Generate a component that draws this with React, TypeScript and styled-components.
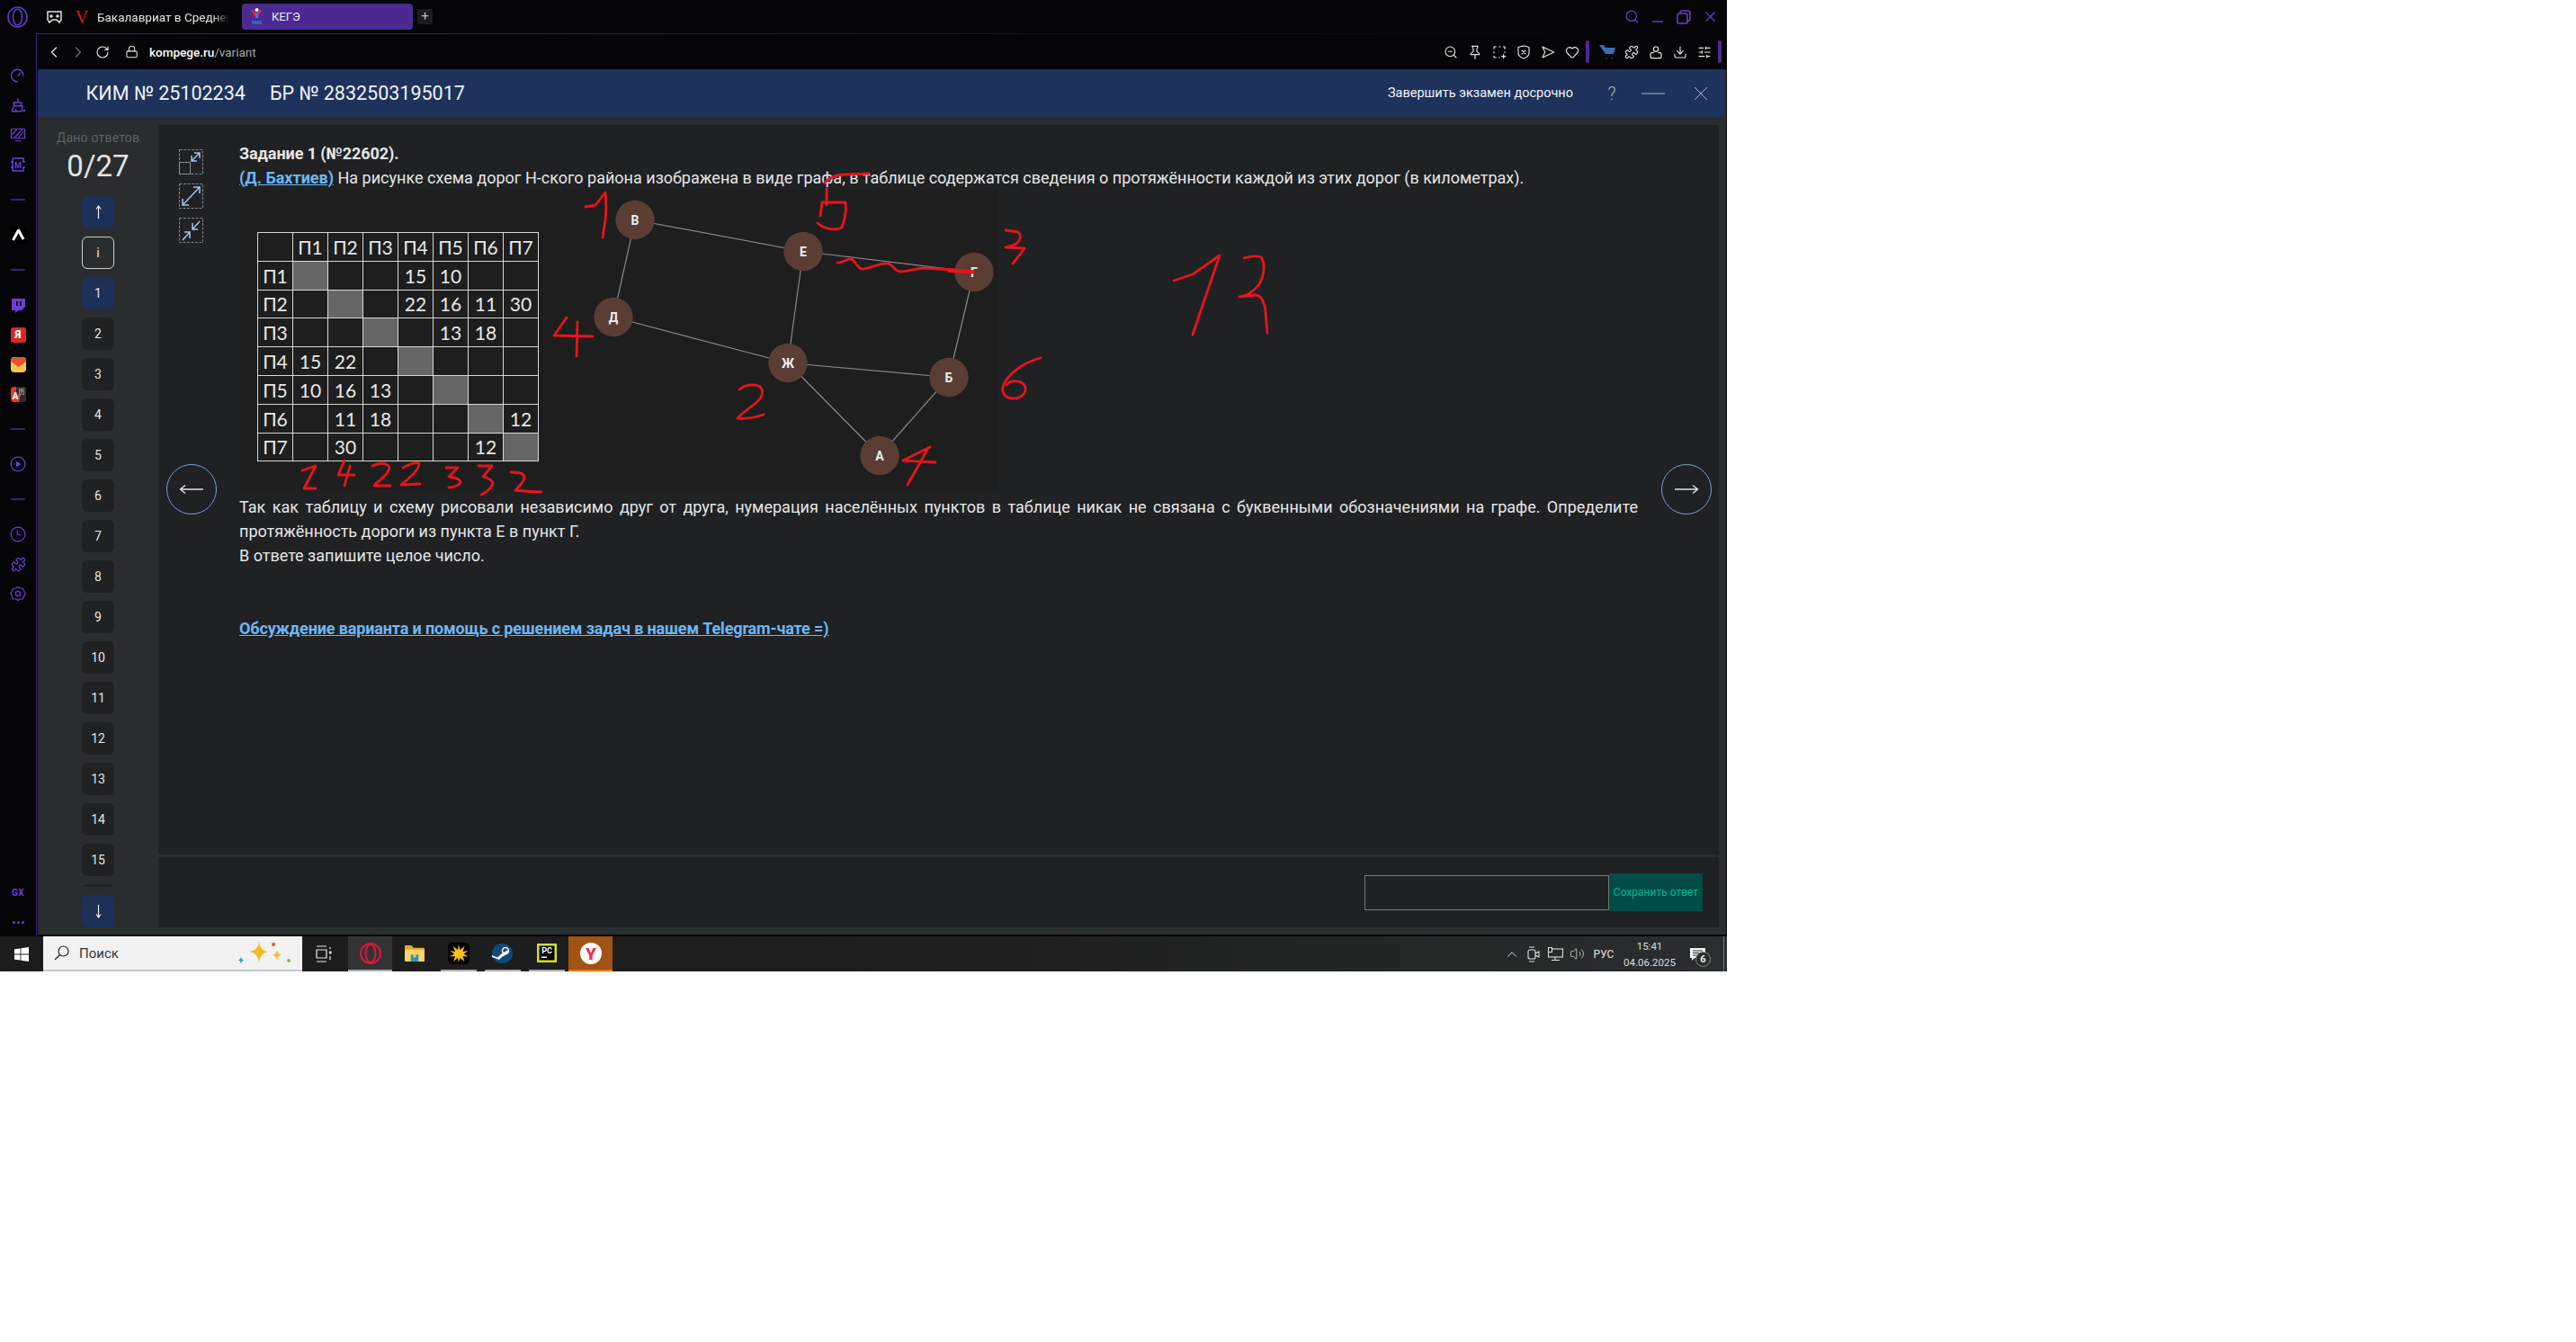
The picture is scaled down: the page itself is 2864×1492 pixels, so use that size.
import React from "react";
import styled, { createGlobalStyle } from "styled-components";
import {
  ChevronLeft, ChevronRight, RotateCw, Lock, ZoomOut, Heart, Puzzle, Download,
  SlidersHorizontal, Search, X, ChevronUp, Volume2,
} from "lucide-react";

const Global = createGlobalStyle`
  html, body { margin: 0; padding: 0; background: #fff; }
  body { width: 2864px; height: 1492px; overflow: hidden; font-family: Roboto, "Liberation Sans", sans-serif; }
  * { box-sizing: border-box; }
`;

const Stage = styled.div`
  position: relative; width: 1920px; height: 1080px;
  display: flex; flex-direction: column; background: #050507; overflow: hidden;
`;

/* ---------- tab strip ---------- */
const TabStrip = styled.div`
  height: 37px; flex: none; display: flex; align-items: center; padding: 0 4.5px 0 8px; color: #e8e8e8;
`;
const StripIcon = styled.span<{ $ml: number; $w: number }>`
  display: flex; align-items: center; justify-content: center; flex: none;
  width: ${p => p.$w}px; margin-left: ${p => p.$ml}px;
`;
const InactiveTitle = styled.span`
  width: 147px; margin-left: 9px; font-size: 13.5px; white-space: nowrap; color: #e4e4e4; flex: none;
  -webkit-mask-image: linear-gradient(90deg, #000 88%, transparent 100%);
  mask-image: linear-gradient(90deg, #000 88%, transparent 100%);
`;
const ActiveTab = styled.div`
  width: 190px; height: 29px; margin-left: 14px; background: #4b2a91; border-radius: 4px; flex: none;
  display: flex; align-items: center; padding-left: 10px; gap: 10px; font-size: 13px; color: #f0ecfa;
`;
const NewTab = styled.div`
  width: 17px; height: 17px; margin-left: 5px; background: #1b1b20; border-radius: 3px; color: #bbb;
  display: flex; align-items: center; justify-content: center; font-size: 15px; line-height: 1;
`;
const WindowControls = styled.div`
  margin-left: auto; display: flex; color: #6a3fd8;
`;
const WindowButton = styled.span`
  width: 29px; display: flex; align-items: center; justify-content: center;
`;

/* ---------- browser body ---------- */
const BrowserRow = styled.div`
  flex: 1; min-height: 0; display: flex;
`;
const Sidebar = styled.aside`
  width: 40px; flex: none; display: flex; flex-direction: column; padding-top: 30.5px; align-items: center;
`;
const SideItem = styled.div`
  height: 33px; width: 100%; flex: none; display: flex; align-items: center; justify-content: center; color: #6a3fd8;
`;
const SideDivider = styled.div`
  width: 16px; height: 2px; flex: none; margin: 21.5px 0; background: #3a2178; border-radius: 1px;
`;
const GxMark = styled.div`
  margin-top: auto; height: 36px; display: flex; align-items: center; font-size: 10px; font-weight: 700;
  letter-spacing: 0.5px; color: #6a3fd8;
`;
const MoreDots = styled.div`
  height: 30px; display: flex; align-items: center; gap: 2px;
`;
const MoreDot = styled.span`
  width: 3px; height: 3px; border-radius: 50%; background: #6a3fd8;
`;
const RedYa = styled.div`
  width: 17px; height: 17px; border-radius: 3px; background: #d9281f; color: #fff;
  display: flex; align-items: center; justify-content: center; font-size: 12px; font-weight: 900;
`;
const LogoTile = styled.div`
  width: 19px; height: 19px; border-radius: 3px; background: #000; display: flex; align-items: center; justify-content: center;
`;

const Pane = styled.main`
  flex: 1; min-width: 0; display: flex; flex-direction: column;
  border-left: 1px solid #3f2480;
  border-top: 1px solid transparent;
  border-image: linear-gradient(90deg, #3f2480, #2a1a58 40%, #0c0a14 75%, #050507) 1;
  border-right: 0; border-bottom: 0;
  padding-left: 1px;
`;
const AddressBar = styled.div`
  height: 39px; flex: none; display: flex; align-items: center; padding: 0 6px 0 4px; color: #e4e4e4;
`;
const BarIcon = styled.span<{ $dim?: boolean; $ml?: number }>`
  width: 27px; flex: none; display: flex; align-items: center; justify-content: center;
  margin-left: ${p => p.$ml ?? 0}px; color: ${p => (p.$dim ? "#6b6b6b" : "#e6e6e6")};
`;
const Url = styled.span`
  margin-left: 6.5px; font-size: 13.5px; font-weight: 500; color: #fff; white-space: nowrap;
`;
const UrlPath = styled.span`
  color: #a8a8a8; font-weight: 400;
`;
const BarGroup = styled.div`
  margin-left: auto; display: flex; align-items: center;
`;
const BarAccent = styled.span<{ $ml?: number }>`
  width: 4px; height: 25px; border-radius: 2px; background: #4b2a91; flex: none;
  margin: 0 ${p => p.$ml ?? 1.5}px 0 1.5px;
`;

const ExamHeader = styled.header`
  height: 53px; flex: none; display: flex; align-items: center; background: #1e325c; color: #eef2fa;
  padding-left: 53.5px; margin-right: 1px; border-radius: 2px 2px 0 0;
`;
const ExamId = styled.span`
  font-size: 21.5px; margin-right: 27px; white-space: nowrap;
`;
const FinishLink = styled.span`
  margin-left: auto; font-size: 14.5px; color: #eef2fa; white-space: nowrap;
`;
const HelpMark = styled.span`
  width: 10px; margin-left: 38px; color: #aab2c2; font-size: 20px; font-weight: 300; line-height: 1; text-align: center;
`;
const HeaderAction = styled.span<{ $ml: number }>`
  margin-left: ${p => p.$ml}px; color: #aab2c2; display: flex; align-items: center;
`;

const ExamBody = styled.div`
  height: 909px; flex: none; display: flex; background: #2a2d2e; margin-right: 1px;
  padding: 0 8px 8px 0;
`;
const NavPanel = styled.nav`
  width: 134px; flex: none; display: flex; flex-direction: column; align-items: center; padding-top: 14px;
`;
const NavLabel = styled.div`
  font-size: 14px; line-height: 18px; color: #5e6264; letter-spacing: 0.2px; white-space: nowrap;
`;
const NavCount = styled.div`
  font-size: 33px; line-height: 40px; margin: 3px 0 13px; color: #e4e4e4;
`;
const NavScroll = styled.div`
  height: 723px; width: 36px; overflow: hidden; flex: none; margin: 9px 0;
  display: flex; flex-direction: column; gap: 9px;
`;
const NavButton = styled.div<{ $kind?: "active" | "info" }>`
  width: 36px; height: 36px; flex: none; border-radius: 6px; display: flex; align-items: center; justify-content: center;
  font-size: 14px; color: #e6e6e6;
  background: ${p => (p.$kind === "active" ? "#1d3058" : p.$kind === "info" ? "transparent" : "#1f2123")};
  border: ${p => (p.$kind === "info" ? "1px solid #cfcfcf" : "none")};
`;

const MainColumn = styled.div`
  flex: 1; min-width: 0; padding-top: 9px; display: flex; flex-direction: column; gap: 3px; position: relative;
`;
const TaskArea = styled.section`
  flex: 1; min-height: 0; background: #1f2123; display: flex; padding: 17.5px 0 0 23px; overflow: hidden;
`;
const ToolColumn = styled.div`
  width: 27px; flex: none; margin: 9.5px 40px 0 0; display: flex; flex-direction: column; gap: 10px;
`;
const ToolButton = styled.div`
  width: 27px; height: 28px; display: flex; align-items: center; justify-content: center;
`;
const TaskText = styled.article`
  width: 1555px; flex: none; font-size: 18px; line-height: 27px; color: #e6e6e6;
`;
const TaskTitle = styled.div`
  font-weight: 700; letter-spacing: -0.08px;
`;
const Author = styled.span`
  font-weight: 700; color: #6cb8f5; text-decoration: underline;
`;
const Figure = styled.div`
  width: 844px; height: 333px; margin-bottom: 6.5px; background: #1e1e1e; display: flex; align-items: flex-start; padding: 47.5px 0 0 20px;
`;
const RoadTable = styled.table`
  border-collapse: collapse; table-layout: fixed; width: 312px; height: 255px; flex: none;
  font-family: Lato, "Liberation Sans", sans-serif; font-size: 21px; color: #e8e8e8;
`;
const RoadCell = styled.td<{ $fill?: boolean }>`
  border: 1px solid #d8d8d8; padding: 0; text-align: center; width: 39px; height: 31.8px;
  background: ${p => (p.$fill ? "#666" : "transparent")}; line-height: 1;
`;
const GraphSvg = styled.svg`
  width: 470px; height: 333px; margin: -47.5px 0 0 42px; flex: none;
`;
const GraphLabel = styled.text`
  font: 700 14px Roboto, sans-serif; fill: #eee; text-anchor: middle; dominant-baseline: central;
`;
const Justified = styled.p`
  margin: 0; text-align: justify;
`;
const Plain = styled.p`
  margin: 0;
`;
const ChatLink = styled.p`
  margin: 54px 0 0; font-weight: 700; color: #6cb8f5; text-decoration: underline; letter-spacing: -0.14px;
`;
const AnswerArea = styled.section`
  height: 78px; flex: none; background: #1f2123; display: flex; align-items: center; justify-content: flex-end; padding-right: 18px;
`;
const AnswerInput = styled.div`
  width: 272px; height: 39px; border: 1px solid #777; flex: none;
`;
const SaveButton = styled.div`
  width: 104px; height: 42px; background: #004d47; color: #00b894; font-size: 12px;
  display: flex; align-items: center; justify-content: center; white-space: nowrap; flex: none;
`;
const PageArrow = styled.div<{ $side: "left" | "right" }>`
  position: absolute; top: 386px; ${p => (p.$side === "left" ? "left: 9px;" : "right: 8px;")}
  width: 56px; height: 56px; border-radius: 50%; border: 1.5px solid #7d9fd0; background: #1f2123;
  display: flex; align-items: center; justify-content: center;
`;

/* ---------- taskbar ---------- */
const Taskbar = styled.footer`
  height: 40px; flex: none; display: flex; border-top: 1px solid #050505;
  background: linear-gradient(90deg, #1c1c1c, #1f1f1f 60%, #2a2e2e);
  color: #e6e6e6;
`;
const StartButton = styled.div`
  width: 48px; display: flex; align-items: center; justify-content: center; flex: none;
`;
const SearchBox = styled.div`
  width: 288px; flex: none; background: #f2f2f2; border-bottom: 2px solid #c9c9c9; display: flex; align-items: center;
  padding-left: 12px; color: #333; font-size: 15px; gap: 11px;
`;
const Sparkles = styled.svg`
  margin-left: auto; margin-right: 11px;
`;
const TaskView = styled.div`
  width: 48px; margin-right: 3px; flex: none; display: flex; align-items: center; justify-content: center;
`;
const TaskTile = styled.div<{ $bg?: string }>`
  width: 49px; flex: none; display: flex; flex-direction: column; align-items: center; background: ${p => p.$bg ?? "transparent"};
`;
const TileIcon = styled.div`
  flex: 1; display: flex; align-items: center; justify-content: center;
`;
const TileBar = styled.div<{ $color?: string; $w: number }>`
  height: 2px; width: ${p => p.$w}px; background: ${p => p.$color ?? "transparent"}; flex: none;
`;
const Tray = styled.div`
  margin-left: auto; display: flex; align-items: stretch; flex: none; padding-right: 3px;
`;
const TrayIcon = styled.div<{ $w?: number }>`
  width: ${p => p.$w ?? 24}px; display: flex; align-items: center; justify-content: center; font-size: 12px; color: #e0e0e0;
`;
const Clock = styled.div`
  width: 66px; display: flex; flex-direction: column; align-items: center; justify-content: center; font-size: 11.5px; line-height: 18px;
  color: #dcdcdc; white-space: nowrap;
`;
const TraySeparator = styled.div`
  width: 1px; margin-left: 9px; background: #777;
`;
const NotifyBox = styled.div`
  width: 40px; position: relative; display: flex; align-items: center; justify-content: center;
`;
const NotifyBadge = styled.span`
  position: absolute; left: 18px; top: 17px; width: 17px; height: 17px; border-radius: 50%;
  background: #2b2b2b; border: 1px solid #888; color: #eee; font-size: 11px; font-weight: 700;
  display: flex; align-items: center; justify-content: center;
`;

const InkLayer = styled.svg`
  position: absolute; left: 0; top: 0; width: 1920px; height: 1080px; pointer-events: none;
`;

/* ---------- small drawings ---------- */
const P = (props: React.SVGProps<SVGSVGElement> & { s?: number }) => {
  const { s = 20, children, ...rest } = props;
  return (
    <svg width={s} height={s} viewBox="0 0 24 24" fill="none" stroke="currentColor" strokeWidth={2} strokeLinecap="round" strokeLinejoin="round" {...rest}>
      {children}
    </svg>
  );
};

const header = ["", "П1", "П2", "П3", "П4", "П5", "П6", "П7"];
const rows: string[][] = [
  ["П1", "#", "", "", "15", "10", "", ""],
  ["П2", "", "#", "", "22", "16", "11", "30"],
  ["П3", "", "", "#", "", "13", "18", ""],
  ["П4", "15", "22", "", "#", "", "", ""],
  ["П5", "10", "16", "13", "", "#", "", ""],
  ["П6", "", "11", "18", "", "", "#", "12"],
  ["П7", "", "30", "", "", "", "12", "#"],
];

const nodes: Record<string, [number, number]> = {
  В: [705, 244], Е: [892, 279], Г: [1082, 302], Д: [681, 352], Ж: [875, 403], Б: [1054, 419], А: [977, 506],
};
const edges = ["ВЕ", "ЕГ", "ВД", "ДЖ", "ЕЖ", "ЖБ", "ГБ", "ЖА", "БА"];

const ink: string[] = [
  "M651 230L662 228L673 214C674 225 674 235 673 245L670 264",
  "M917 203C922 198 930 194 940 194L966 193",
  "M919 210L919 228M914 225L940 225C941 235 939 245 936 253C930 256 918 256 909 248M914 225L912 240",
  "M1118 256L1132 258C1136 262 1135 268 1128 272L1118 275L1139 276C1135 282 1130 288 1126 293",
  "M931 292C936 293 942 287 947 288C951 290 953 298 958 299C966 300 978 291 988 293C993 295 995 302 1001 302C1010 302 1018 298 1028 298L1061 300L1082 302",
  "M1055 300L1082 302M1055 301.5L1082 303",
  "M630 353L616 373L659 374M642 358L641 396",
  "M822 433C828 428 838 426 845 430C851 436 846 444 838 450C830 456 822 462 820 465C830 466 840 464 849 461",
  "M1157 398C1140 402 1120 415 1115 430C1113 442 1125 445 1133 442C1142 438 1142 428 1135 425C1128 422 1122 424 1119 428",
  "M1004 512L1034 497M1004 512L1040 514M1031 500L1009 539",
  "M1305 312L1326 305L1356 284L1326 372",
  "M1383 287C1390 285 1398 284 1402 286C1407 292 1406 305 1400 316C1394 324 1385 330 1378 330L1395 328C1403 328 1406 336 1407 347L1409 370",
  "M336 523L351 518L338 543L351 543",
  "M383 512L376 528L394 528M389 518L383 540",
  "M414 518C420 515 430 513 433 520C432 528 420 535 416 540L434 540",
  "M448 520C454 516 462 514 466 515C466 524 452 534 446 539L467 538",
  "M496 520L509 520L499 530C506 531 512 533 512 536C510 540 504 542 499 542",
  "M532 518L547 518L537 530C542 531 548 534 548 538C546 543 540 548 535 550",
  "M568 525C574 525 582 525 583 530C583 536 577 541 573 545C582 546 592 547 602 547",
];

const navNumbers = Array.from({ length: 15 }, (_, i) => i + 1);

const NavArrow = ({ down }: { down?: boolean }) => (
  <svg width="9" height="16" viewBox="0 0 9 16" fill="none" stroke="#f0f0f0" strokeWidth="1.200">
    {down ? <path d="M4.500 1v13M2 11.500l2.500 3.500L7 11.500" /> : <path d="M4.500 15V2M2 4.500L4.500 1 7 4.500" />}
  </svg>
);

export default function App() {
  return (
    <>
      <Global />
      <Stage>
        <TabStrip>
          <StripIcon $ml={0} $w={23}>
            <svg width="23" height="24" viewBox="0 0 23 24" fill="none" stroke="#5f3bd0" strokeWidth="1.6">
              <ellipse cx="11.5" cy="12" rx="10.5" ry="11" />
              <ellipse cx="11.5" cy="12" rx="5" ry="9" />
            </svg>
          </StripIcon>
          <StripIcon $ml={19} $w={20}>
            <svg width="17" height="14" viewBox="0 0 17 14" fill="none" stroke="#e4e4e4" strokeWidth="1.5">
              <path d="M1 1h15v9l-2 3-3-3H6l-3 3-2-3z" />
              <circle cx="5" cy="6" r="1" fill="#e4e4e4" />
              <circle cx="12" cy="6" r="1" fill="#e4e4e4" />
            </svg>
          </StripIcon>
          <StripIcon $ml={13} $w={16}>
            <svg width="16" height="24" viewBox="0 0 16 24">
              <text x="8" y="19" textAnchor="middle" fontFamily="Liberation Serif" fontSize="20" fill="#d71920">V</text>
            </svg>
          </StripIcon>
          <InactiveTitle>Бакалавриат в Среднеру</InactiveTitle>
          <ActiveTab>
            <svg width="13" height="22" viewBox="0 0 13 22">
              <circle cx="6.5" cy="3" r="2" fill="#fff" />
              <path d="M1 3l5 7 5-7" fill="none" stroke="#e0303a" strokeWidth="2.4" />
              <path d="M6.5 6v6" stroke="#3a7bd5" strokeWidth="3" />
              <rect x="1" y="15" width="11" height="4" fill="#2a63c9" />
            </svg>
            КЕГЭ
          </ActiveTab>
          <NewTab>+</NewTab>
          <WindowControls>
            <WindowButton><Search size={17} strokeWidth={1.7} /></WindowButton>
            <WindowButton>
              <svg width="14" height="14" viewBox="0 0 14 14"><path d="M1 12h12" stroke="currentColor" strokeWidth="1.4" /></svg>
            </WindowButton>
            <WindowButton>
              <svg width="16" height="16" viewBox="0 0 16 16" fill="none" stroke="currentColor" strokeWidth="1.5">
                <rect x="1" y="4" width="11" height="11" rx="2" />
                <path d="M4 4V3a2 2 0 0 1 2-2h7a2 2 0 0 1 2 2v7a2 2 0 0 1-2 2h-1" />
              </svg>
            </WindowButton>
            <WindowButton><X size={19} strokeWidth={1.4} /></WindowButton>
          </WindowControls>
        </TabStrip>

        <BrowserRow>
          <Sidebar>
            <SideItem>
              <P s={18} strokeWidth={1.8}><path d="M11 21a9 9 0 1 1 9-9" /><path d="M12 12l4-4" /></P>
            </SideItem>
            <SideItem>
              <P s={18} strokeWidth={1.8}>
                <path d="M12 2v5M6 8h11v5H6zM6 13l-3 8h14l2-8M8 21l1-3" />
                <circle cx="21" cy="20" r="1" fill="currentColor" />
              </P>
            </SideItem>
            <SideItem>
              <P s={18} strokeWidth={1.6}>
                <rect x="2" y="3" width="20" height="14" />
                <path d="M4 11l6-7M7 16l11-12M13 16l7-9M8 21h8" />
              </P>
            </SideItem>
            <SideItem>
              <svg width="18" height="20" viewBox="0 0 18 20" fill="none" stroke="currentColor" strokeWidth="1.5">
                <path d="M3 3h12v4M15 13v4H3V3" />
                <path d="M1 7h3M1 13h3M14 7h3M14 13h3" />
                <text x="9" y="14" textAnchor="middle" fontSize="9" fontWeight="700" fill="currentColor" stroke="none" fontFamily="Roboto">M</text>
              </svg>
            </SideItem>
            <SideDivider />
            <SideItem>
              <LogoTile>
                <svg width="15" height="14" viewBox="0 0 15 14" fill="none" stroke="#fff" strokeWidth="3">
                  <path d="M1.5 13L7 3M7 1l6 11" />
                </svg>
              </LogoTile>
            </SideItem>
            <SideDivider />
            <SideItem>
              <svg width="16" height="17" viewBox="0 0 16 17" fill="#6a3fd8">
                <path d="M1 1h15v9l-4 4H8l-3 3v-3H1zM6 4v5h1.6V4zm4 0v5h1.6V4z" fillRule="evenodd" />
              </svg>
            </SideItem>
            <SideItem><RedYa>Я</RedYa></SideItem>
            <SideItem>
              <svg width="17" height="17" viewBox="0 0 17 17">
                <rect width="17" height="17" rx="4" fill="#f2c84b" />
                <path d="M0 4a4 4 0 0 1 4-4h9a4 4 0 0 1 4 4v1l-8.500 6L0 5z" fill="#e8532b" />
              </svg>
            </SideItem>
            <SideItem>
              <svg width="17" height="17" viewBox="0 0 17 17">
                <rect width="17" height="17" rx="4" fill="#e63a26" />
                <path d="M13 0a4 4 0 0 1 4 4v9a4 4 0 0 1-4 4H9L13 0z" fill="#2b2b2b" />
                <path d="M6 0h7l-2 9H6z" fill="#2b2b2b" />
                <text x="5" y="14" textAnchor="middle" fontSize="10" fontWeight="700" fill="#fff" fontFamily="Roboto">A</text>
                <text x="12" y="8" textAnchor="middle" fontSize="7" fill="#ddd" fontFamily="Noto Sans CJK SC">历</text>
              </svg>
            </SideItem>
            <SideDivider />
            <SideItem>
              <P s={18} strokeWidth={1.6}><circle cx="12" cy="12" r="10.500" /><path d="M10 8.500l5 3.500-5 3.500z" fill="currentColor" /></P>
            </SideItem>
            <SideDivider />
            <SideItem>
              <P s={18} strokeWidth={1.6}><circle cx="12" cy="12" r="10.500" /><path d="M11 6v7h5" /></P>
            </SideItem>
            <SideItem><Puzzle size={17} strokeWidth={1.8} /></SideItem>
            <SideItem>
              <P s={18} strokeWidth={1.6}>
                <path d="M12 2l3 2 4 0 1.500 3.500L23 12l-2.500 4.500L19 20l-4 0-3 2-3-2-4 0-1.500-3.500L1 12l2.500-4.500L5 4l4 0z" />
                <circle cx="12" cy="12" r="3.500" />
              </P>
            </SideItem>
            <GxMark>GX</GxMark>
            <MoreDots><MoreDot /><MoreDot /><MoreDot /></MoreDots>
          </Sidebar>

          <Pane>
            <AddressBar>
              <BarIcon><ChevronLeft size={20} strokeWidth={1.6} /></BarIcon>
              <BarIcon $dim><ChevronRight size={20} strokeWidth={1.6} /></BarIcon>
              <BarIcon><RotateCw size={16} strokeWidth={1.7} /></BarIcon>
              <BarIcon $ml={5.5}><Lock size={15} strokeWidth={1.7} /></BarIcon>
              <Url>kompege.ru<UrlPath>/variant</UrlPath></Url>
              <BarGroup>
                <BarIcon><ZoomOut size={16} strokeWidth={1.6} /></BarIcon>
                <BarIcon>
                  <P s={16} strokeWidth={1.7}><path d="M7 2h10l-2 4v5l4 3v2H5v-2l4-3V6zM12 16v7" /></P>
                </BarIcon>
                <BarIcon>
                  <P s={16} strokeWidth={1.8}>
                    <path d="M3 7V3h4M11 3h3M18 3h3v4M21 11v2M3 11v3M3 18v3h4M11 21h2" strokeLinecap="butt" />
                    <path d="M19 16v6M16 19h6" />
                  </P>
                </BarIcon>
                <BarIcon>
                  <P s={16} strokeWidth={1.7}>
                    <path d="M3 4a20 20 0 0 1 18 0v9c0 5-5 8-9 9.500C8 21 3 18 3 13z" />
                    <path d="M9 9l6 6M15 9l-6 6" />
                  </P>
                </BarIcon>
                <BarIcon>
                  <P s={16} strokeWidth={1.7}><path d="M3 3l19 9-19 9 4-9z" /></P>
                </BarIcon>
                <BarIcon><Heart size={16} strokeWidth={1.7} /></BarIcon>
                <BarAccent $ml={6.5} />
                <BarIcon>
                  <svg width="18" height="18" viewBox="0 0 18 18">
                    <path d="M0 1h5l2 3h11l-2 7H7z" fill="#3c6cb4" />
                    <circle cx="8" cy="16" r="1" fill="#333" />
                    <circle cx="14" cy="16" r="1" fill="#333" />
                  </svg>
                </BarIcon>
                <BarIcon><Puzzle size={16} strokeWidth={1.7} /></BarIcon>
                <BarIcon>
                  <P s={16} strokeWidth={1.8}>
                    <circle cx="12" cy="7" r="4" />
                    <path d="M8 13H5a2 2 0 0 0-2 2v5a2 2 0 0 0 2 2h14a2 2 0 0 0 2-2v-5a2 2 0 0 0-2-2h-3" />
                  </P>
                </BarIcon>
                <BarIcon><Download size={16} strokeWidth={1.7} /></BarIcon>
                <BarIcon><SlidersHorizontal size={16} strokeWidth={1.7} /></BarIcon>
                <BarAccent $ml={0} />
              </BarGroup>
            </AddressBar>

            <ExamHeader>
              <ExamId>КИМ № 25102234</ExamId>
              <ExamId>БР № 2832503195017</ExamId>
              <FinishLink>Завершить экзамен досрочно</FinishLink>
              <HelpMark>?</HelpMark>
              <HeaderAction $ml={28}>
                <svg width="26" height="4" viewBox="0 0 26 4"><path d="M0 2h26" stroke="currentColor" strokeWidth="1" /></svg>
              </HeaderAction>
              <HeaderAction $ml={32}>
                <svg width="16" height="16" viewBox="0 0 16 16" fill="none" stroke="currentColor" strokeWidth="1">
                  <path d="M1 1l14 14M15 1L1 15" />
                </svg>
              </HeaderAction>
              <HeaderAction $ml={20} />
            </ExamHeader>

            <ExamBody>
              <NavPanel>
                <NavLabel>Дано ответов</NavLabel>
                <NavCount>0/27</NavCount>
                <NavButton $kind="active"><NavArrow /></NavButton>
                <NavScroll>
                  <NavButton $kind="info">i</NavButton>
                  {navNumbers.map(n => (
                    <NavButton key={n} $kind={n === 1 ? "active" : undefined}>{n}</NavButton>
                  ))}
                  <NavButton />
                </NavScroll>
                <NavButton $kind="active"><NavArrow down /></NavButton>
              </NavPanel>

              <MainColumn>
                <TaskArea>
                  <ToolColumn>
                    <ToolButton>
                      <svg width="27" height="28" viewBox="0 0 27 28" fill="none">
                        <rect x="0.500" y="0.500" width="26" height="27" stroke="#7f8a98" strokeDasharray="3 1.500" />
                        <rect x="0.500" y="14.500" width="12" height="13" stroke="#8a8f96" />
                        <path d="M14 13l9-9M17 4h6v6M14 7v6h6" stroke="#a6c4ea" strokeWidth="1.500" />
                      </svg>
                    </ToolButton>
                    <ToolButton>
                      <svg width="27" height="28" viewBox="0 0 27 28" fill="none">
                        <rect x="0.500" y="0.500" width="26" height="27" stroke="#7f8a98" strokeDasharray="3 1.500" />
                        <path d="M4 24L23 4M16 4h7v7M4 17v7h7" stroke="#a6c4ea" strokeWidth="1.500" />
                      </svg>
                    </ToolButton>
                    <ToolButton>
                      <svg width="27" height="28" viewBox="0 0 27 28" fill="none">
                        <rect x="0.500" y="0.500" width="26" height="27" stroke="#7f8a98" strokeDasharray="3 1.500" />
                        <path d="M4 25l8-9M6 16h6v7M23 4l-8 9M15 6v7h6" stroke="#a6c4ea" strokeWidth="1.500" />
                      </svg>
                    </ToolButton>
                  </ToolColumn>
                  <TaskText>
                    <TaskTitle>Задание 1 (№22602).</TaskTitle>
                    <Plain>
                      <Author>(Д. Бахтиев)</Author> На рисунке схема дорог Н-ского района изображена в виде графа, в таблице содержатся сведения о протяжённости каждой из этих дорог (в километрах).
                    </Plain>
                    <Figure>
                      <RoadTable>
                        <tbody>
                          <tr>{header.map((h, i) => <RoadCell key={i}>{h}</RoadCell>)}</tr>
                          {rows.map(r => (
                            <tr key={r[0]}>
                              {r.map((c, i) => (
                                <RoadCell key={i} $fill={c === "#"}>{c === "#" ? "" : c}</RoadCell>
                              ))}
                            </tr>
                          ))}
                        </tbody>
                      </RoadTable>
                      <GraphSvg viewBox="640 210.500 470 333">
                        {edges.map(e => {
                          const [a, b] = [nodes[e[0]], nodes[e[1]]];
                          return <line key={e} x1={a[0]} y1={a[1]} x2={b[0]} y2={b[1]} stroke="#8a8a8a" strokeWidth="1.200" />;
                        })}
                        {Object.entries(nodes).map(([k, [x, y]]) => (
                          <g key={k}>
                            <circle cx={x} cy={y} r="21.700" fill="#5a3e33" />
                            <GraphLabel x={x} y={y}>{k}</GraphLabel>
                          </g>
                        ))}
                      </GraphSvg>
                    </Figure>
                    <Justified>
                      Так как таблицу и схему рисовали независимо друг от друга, нумерация населённых пунктов в таблице никак не связана с буквенными обозначениями на графе. Определите протяжённость дороги из пункта Е в пункт Г.
                    </Justified>
                    <Plain>В ответе запишите целое число.</Plain>
                    <ChatLink>Обсуждение варианта и помощь с решением задач в нашем Telegram-чате =)</ChatLink>
                  </TaskText>
                </TaskArea>
                <AnswerArea>
                  <AnswerInput />
                  <SaveButton>Сохранить ответ</SaveButton>
                </AnswerArea>
                <PageArrow $side="left">
                  <svg width="28" height="12" viewBox="0 0 28 12" fill="none" stroke="#e2e2e2" strokeWidth="1.400">
                    <path d="M27 6H2M7 1.500L1.500 6 7 10.500" />
                  </svg>
                </PageArrow>
                <PageArrow $side="right">
                  <svg width="28" height="12" viewBox="0 0 28 12" fill="none" stroke="#e2e2e2" strokeWidth="1.400">
                    <path d="M1 6h25M21 1.500L26.500 6 21 10.500" />
                  </svg>
                </PageArrow>
              </MainColumn>
            </ExamBody>
          </Pane>
        </BrowserRow>

        <Taskbar>
          <StartButton>
            <svg width="16" height="16" viewBox="0 0 16 16" fill="#fff">
              <path d="M0 2.300l6.600-.9v6.200H0zM7.400 1.300L16 0v7.600H7.400zM0 8.400h6.600v6.200L0 13.700zM7.400 8.400H16V16l-8.600-1.200z" />
            </svg>
          </StartButton>
          <SearchBox>
            <svg width="17" height="17" viewBox="0 0 17 17" fill="none" stroke="#222" strokeWidth="1.200">
              <circle cx="10.500" cy="6.500" r="5.500" /><path d="M6.500 10.500L1 16" />
            </svg>
            Поиск
            <Sparkles width="62" height="32" viewBox="0 0 62 32">
              <path d="M25 3c1 7 4 10 10 11-6 1-9 5-10 12-1-7-4-11-11-12 7-1 10-4 11-11z" fill="#f5b921" />
              <path d="M45 12c.5 3 2 5 5 6-3 .5-4.500 2-5 6-.5-4-2-5.500-5-6 3-1 4.500-3 5-6z" fill="#f5c033" />
              <path d="M5 20c.5 2 1.500 3 3.500 3.500-2 .5-3 1.500-3.500 4-.5-2.500-1.500-3.500-3.500-4 2-.5 3-1.500 3.500-3.500z" fill="#25a3e8" />
              <circle cx="41" cy="6" r="2" fill="#e8552b" />
              <circle cx="58" cy="24" r="2" fill="#7cc242" />
            </Sparkles>
          </SearchBox>
          <TaskView>
            <svg width="18" height="19" viewBox="0 0 18 19" fill="none" stroke="#e6e6e6" strokeWidth="1.200">
              <path d="M1 1h11M1 18h11M1 5h11v9H1z" />
              <rect x="15" y="6.500" width="2.500" height="3" fill="#e6e6e6" stroke="none" />
              <path d="M16 2v2M16 12v4" />
            </svg>
          </TaskView>
          <TaskTile $bg="#333">
            <TileIcon>
              <svg width="24" height="24" viewBox="0 0 24 24" fill="none" stroke="#d7193f" strokeWidth="2">
                <circle cx="12" cy="12" r="11" /><ellipse cx="12" cy="12" rx="5.500" ry="10" />
              </svg>
            </TileIcon>
            <TileBar $color="#aaa" $w={49} />
          </TaskTile>
          <TaskTile>
            <TileIcon>
              <svg width="22" height="19" viewBox="0 0 23 20">
                <path d="M0 2a1 1 0 0 1 1-1h7l2 3h12a1 1 0 0 1 1 1v14a1 1 0 0 1-1 1H1a1 1 0 0 1-1-1z" fill="#e8a728" />
                <path d="M0 6h23v13a1 1 0 0 1-1 1H1a1 1 0 0 1-1-1z" fill="#fbd568" />
                <rect x="7" y="12" width="9" height="8" fill="#2d8fd5" />
                <rect x="10" y="12" width="3" height="3" fill="#fbd568" />
              </svg>
            </TileIcon>
            <TileBar $w={43} />
          </TaskTile>
          <TaskTile>
            <TileIcon>
              <svg width="24" height="24" viewBox="0 0 24 24">
                <rect width="24" height="24" rx="5" fill="#000" />
                <path d="M12 2l1.500 6 5-4-2 6 6-1-5 3.500 5 3-6-.5 2 6-5-4-1.500 5-1-5-5 4 2-6-6 .5 5-3-5-3.500 6 1-2-6 5 4z" fill="#f6c21a" />
              </svg>
            </TileIcon>
            <TileBar $color="#aaa" $w={40} />
          </TaskTile>
          <TaskTile>
            <TileIcon>
              <svg width="23" height="22" viewBox="0 0 23 22">
                <ellipse cx="11.500" cy="11" rx="11.500" ry="11" fill="#12477a" />
                <path d="M0 13l6 2.500 5-4.500 7-4v4l-7 4-3 3-8-3z" fill="#fff" />
                <circle cx="15" cy="8" r="3.500" fill="none" stroke="#fff" strokeWidth="1.500" />
              </svg>
            </TileIcon>
            <TileBar $color="#aaa" $w={40} />
          </TaskTile>
          <TaskTile>
            <TileIcon>
              <svg width="22" height="21" viewBox="0 0 22 21">
                <rect width="22" height="21" fill="#d3e02b" />
                <rect x="2.500" y="2.500" width="17" height="16" fill="#000" />
                <text x="11" y="11" textAnchor="middle" fontFamily="Roboto" fontWeight="700" fontSize="9" fill="#fff">PC</text>
                <rect x="5" y="14.500" width="6" height="1.500" fill="#fff" />
              </svg>
            </TileIcon>
            <TileBar $color="#aaa" $w={40} />
          </TaskTile>
          <TaskTile $bg="#a15313">
            <TileIcon>
              <svg width="24" height="24" viewBox="0 0 24 24">
                <circle cx="12" cy="12" r="12" fill="#fff" />
                <text x="12" y="19" textAnchor="middle" fontFamily="Roboto" fontWeight="900" fontSize="19" fill="#f0304a">Y</text>
              </svg>
            </TileIcon>
            <TileBar $color="#f97316" $w={49} />
          </TaskTile>
          <Tray>
            <TrayIcon><ChevronUp size={18} strokeWidth={1.300} /></TrayIcon>
            <TrayIcon>
              <svg width="14" height="20" viewBox="0 0 14 20" fill="none" stroke="#e0e0e0" strokeWidth="1.100">
                <rect x="1" y="5" width="8" height="10" rx="2" /><path d="M9 9l4-2v6l-4-2M2 2h6M2 18h6" />
              </svg>
            </TrayIcon>
            <TrayIcon>
              <svg width="17" height="15" viewBox="0 0 17 15" fill="none" stroke="#e0e0e0" strokeWidth="1.100">
                <rect x="0.500" y="2" width="16" height="9" /><rect x="0.500" y="0.500" width="4" height="5" fill="#222" />
                <path d="M8 11v3M4 14.500h9" />
              </svg>
            </TrayIcon>
            <TrayIcon><Volume2 size={17} strokeWidth={1.100} /></TrayIcon>
            <TrayIcon $w={36}>РУС</TrayIcon>
            <Clock>
              <span>15:41</span>
              <span>04.06.2025</span>
            </Clock>
            <NotifyBox>
              <svg width="17" height="14" viewBox="0 0 17 14">
                <path d="M0 0h17v11H5l-3 3v-3H0z" fill="#f2f2f2" />
                <path d="M3 3h11M3 5.500h11M3 8h8" stroke="#333" strokeWidth="1" />
              </svg>
              <NotifyBadge>6</NotifyBadge>
            </NotifyBox>
            <TraySeparator />
          </Tray>
        </Taskbar>

        <InkLayer viewBox="0 0 1920 1080" fill="none" stroke="#e8141c" strokeWidth="2.800" strokeLinecap="round" strokeLinejoin="round">
          {ink.map((d, i) => <path key={i} d={d} />)}
        </InkLayer>
      </Stage>
    </>
  );
}
